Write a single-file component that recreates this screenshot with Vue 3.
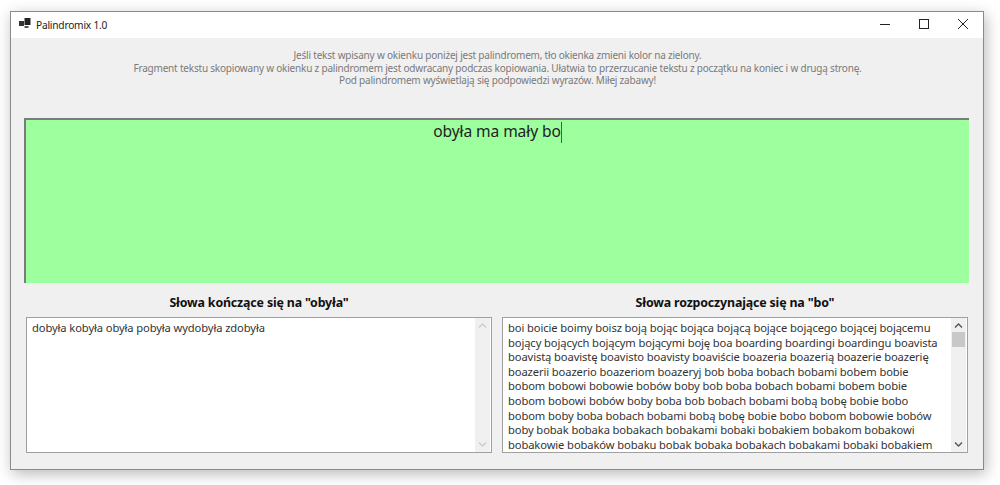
<script setup>
const intro = [
  'Jeśli tekst wpisany w okienku poniżej jest palindromem, tło okienka zmieni kolor na zielony.',
  'Fragment tekstu skopiowany w okienku z palindromem jest odwracany podczas kopiowania. Ułatwia to przerzucanie tekstu z początku na koniec i w drugą stronę.',
  'Pod palindromem wyświetlają się podpowiedzi wyrazów. Miłej zabawy!'
]
const startLines = [
  'boi boicie boimy boisz boją bojąc bojąca bojącą bojące bojącego bojącej bojącemu',
  'bojący bojących bojącym bojącymi boję boa boarding boardingi boardingu boavista',
  'boavistą boavistę boavisto boavisty boaviście boazeria boazerią boazerie boazerię',
  'boazerii boazerio boazeriom boazeryj bob boba bobach bobami bobem bobie',
  'bobom bobowi bobowie bobów boby bob boba bobach bobami bobem bobie',
  'bobom bobowi bobów boby boba bob bobach bobami bobą bobę bobie bobo',
  'bobom boby boba bobach bobami bobą bobę bobie bobo bobom bobowie bobów',
  'boby bobak bobaka bobakach bobakami bobaki bobakiem bobakom bobakowi',
  'bobakowie bobaków bobaku bobak bobaka bobakach bobakami bobaki bobakiem'
]
</script>

<template>
  <div class="page">
    <div class="window">
      <header class="titlebar">
        <svg class="appicon" width="12" height="11" viewBox="0 0 12 11">
          <rect x="0" y="3" width="5" height="5" fill="#333" />
          <rect x="5.5" y="0" width="6" height="7" fill="#222" />
          <rect x="5.5" y="8" width="4" height="2" fill="#555" />
        </svg>
        <span class="title">Palindromix 1.0</span>
        <div class="controls">
          <svg class="ctl" width="20" height="26" viewBox="0 0 20 26"><path d="M5 12.5h10" stroke="#222" fill="none" /></svg>
          <svg class="ctl" width="20" height="26" viewBox="0 0 20 26"><rect x="5.5" y="7.5" width="9" height="9" stroke="#222" fill="none" /></svg>
          <svg class="ctl" width="20" height="26" viewBox="0 0 20 26"><path d="M5 7l10 10M15 7L5 17" stroke="#222" fill="none" /></svg>
        </div>
      </header>
      <main class="body">
        <div class="intro">
          <div v-for="line in intro" :key="line">{{ line }}</div>
        </div>
        <div class="palindrome">
          <span class="typed">obyła ma mały bo</span><span class="caret"></span>
        </div>
        <div class="columns">
          <section class="col">
            <h2 class="heading">Słowa kończące się na "obyła"</h2>
            <div class="listbox">
              <div class="words">dobyła kobyła obyła pobyła wydobyła zdobyła</div>
              <div class="scrollbar">
                <svg width="15" height="16" viewBox="0 0 15 16"><path d="M4 9.5L7.5 6l3.5 3.5" stroke="#ccc" stroke-width="1.4" fill="none" /></svg>
                <svg class="down" width="15" height="16" viewBox="0 0 15 16"><path d="M4 6.5L7.5 10 11 6.5" stroke="#ccc" stroke-width="1.4" fill="none" /></svg>
              </div>
            </div>
          </section>
          <section class="col">
            <h2 class="heading">Słowa rozpoczynające się na "bo"</h2>
            <div class="listbox">
              <div class="words">
                <div v-for="line in startLines" :key="line">{{ line }}</div>
              </div>
              <div class="scrollbar">
                <svg width="15" height="16" viewBox="0 0 15 16"><path d="M4 9.5L7.5 6l3.5 3.5" stroke="#555" stroke-width="1.4" fill="none" /></svg>
                <div class="thumb"></div>
                <svg class="down" width="15" height="16" viewBox="0 0 15 16"><path d="M4 6.5L7.5 10 11 6.5" stroke="#555" stroke-width="1.4" fill="none" /></svg>
              </div>
            </div>
          </section>
        </div>
      </main>
    </div>
  </div>
</template>

<style>
html, body { margin: 0; background: #fff; }
</style>

<style scoped>
.page {
  width: 1000px;
  height: 485px;
  padding: 11px 16px 15px 10px;
  box-sizing: border-box;
  overflow: hidden;
  font-family: "Noto Sans", "Open Sans", sans-serif;
}
.window {
  width: 974px;
  height: 459px;
  box-sizing: border-box;
  border: 1px solid #8a8a8a;
  background: #f0f0f0;
  box-shadow: 2px 4px 14px rgba(0, 0, 0, 0.28);
  display: flex;
  flex-direction: column;
}
.titlebar {
  height: 26px;
  flex: none;
  background: #fff;
  display: flex;
  align-items: center;
  padding-left: 8px;
}
.appicon { margin-top: -3px; }
.title {
  margin-left: 5px;
  font-size: 10.2px;
  letter-spacing: -0.22px;
  color: #222;
}
.controls { margin-left: auto; display: flex; gap: 19px; margin-right: 10px; }
.ctl { display: block; }
.body {
  flex: 1;
  padding: 11px 14px 15px 13px;
  display: flex;
  flex-direction: column;
  min-height: 0;
}
.intro {
  text-align: center;
  font-size: 10px;
  line-height: 12.7px;
  letter-spacing: -0.2px;
  color: #7a7a7a;
  height: 69px;
  flex: none;
  white-space: nowrap;
  padding-left: 2px;
}
.palindrome {
  height: 165px;
  flex: none;
  box-sizing: border-box;
  background: #9dff9d;
  border-top: 2px solid #7c7c7c;
  border-left: 2px solid #7c7c7c;
  text-align: center;
  font-size: 15.6px;
  line-height: 22px;
  color: #222;
  letter-spacing: -0.1px;
}
.caret {
  display: inline-block;
  width: 1px;
  height: 21px;
  background: #555;
  vertical-align: -6px;
}
.columns {
  display: flex;
  gap: 10px;
  margin-top: 6px;
  padding-left: 2px;
  padding-right: 1px;
}
.col { flex: 1; min-width: 0; }
.heading {
  margin: 0;
  height: 28px;
  font-size: 12.4px;
  line-height: 27px;
  font-weight: 700;
  text-align: center;
  color: #111;
  letter-spacing: -0.15px;
}
.listbox {
  height: 136px;
  box-sizing: border-box;
  border: 1px solid #a0a0a0;
  background: #fff;
  display: flex;
  overflow: hidden;
}
.words {
  flex: 1;
  min-width: 0;
  padding: 3px 5px;
  font-size: 11.2px;
  line-height: 14.6px;
  letter-spacing: -0.11px;
  color: #333;
  white-space: nowrap;
  overflow: hidden;
}
.scrollbar {
  width: 15px;
  margin-right: 1px;
  flex: none;
  background: #f0f0f0;
  display: flex;
  flex-direction: column;
  align-items: center;
}
.scrollbar svg { display: block; flex: none; }
.thumb {
  width: 13px;
  height: 15px;
  flex: none;
  background: #c8c8c8;
  margin-top: -2px;
}
.down { margin-top: auto; }
</style>
